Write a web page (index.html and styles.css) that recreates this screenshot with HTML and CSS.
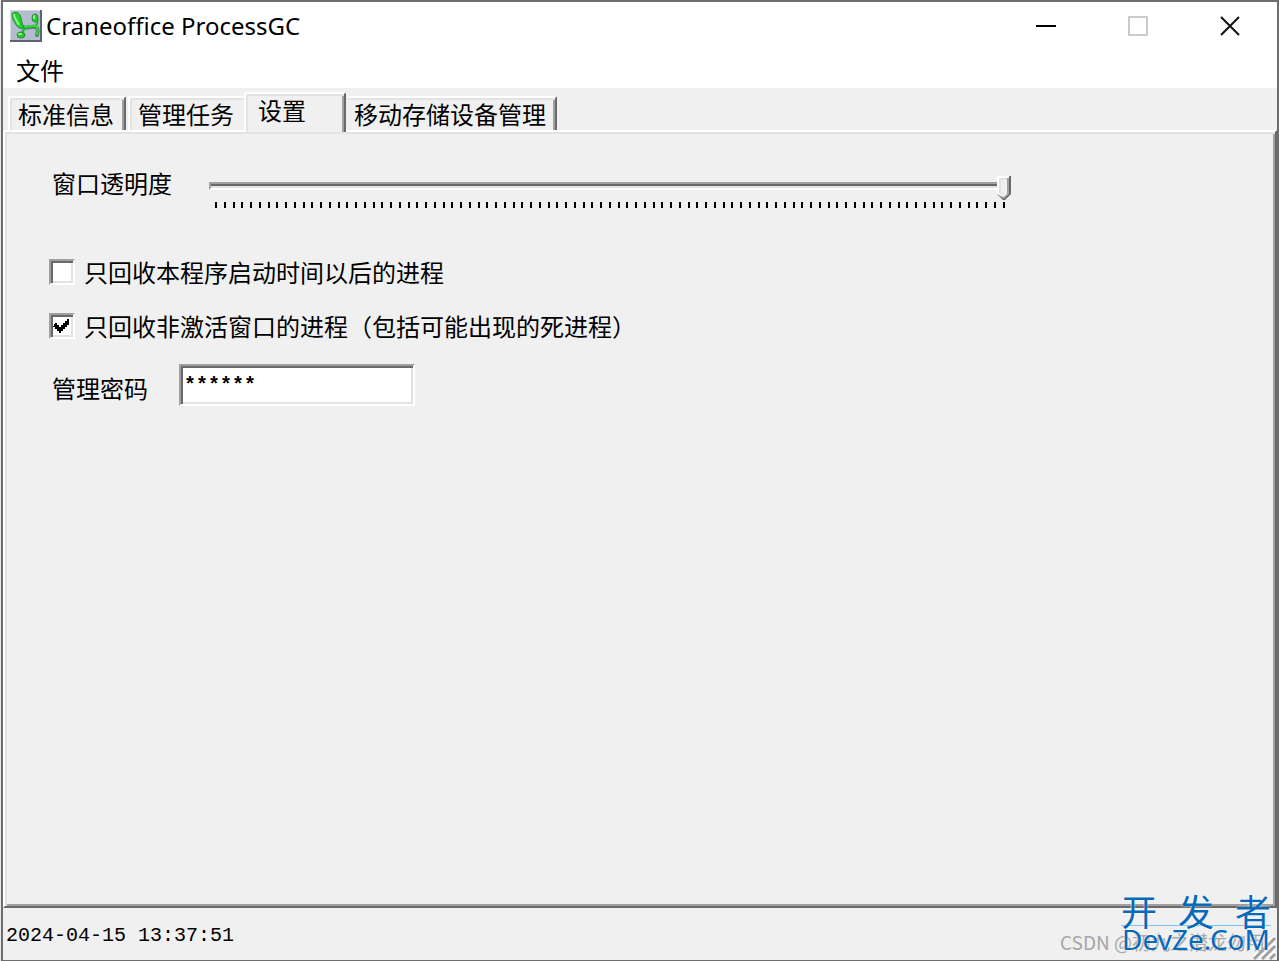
FILE: index.html
```html
<!DOCTYPE html>
<html lang="zh-CN">
<head>
    <meta charset="UTF-8">
    <meta name="viewport" content="width=device-width, initial-scale=1.0">
    <title>Craneoffice ProcessGC</title>
    <link rel="stylesheet" href="styles.css">
</head>
<body>
    <div class="window">
        <div class="titlebar">
            <svg class="app-icon" width="32" height="32" viewBox="0 0 32 32">
                <rect width="32" height="32" fill="#b4bccf"/>
                <path d="M0 31V0h31" fill="none" stroke="#d5d9e2" stroke-width="2"/>
                <path d="M31 0v31H0" fill="none" stroke="#5e6470" stroke-width="2"/>
                <path d="M12 17c5 2 9-1 14 0 2 1 2 4 1 8" fill="none" stroke="#4d8a62" stroke-width="4" stroke-linecap="round"/>
                <path d="M12 16c5 2 9-1 14 0 2 1 2 4 1 8" fill="none" stroke="#2fdc35" stroke-width="2" stroke-linecap="round"/>
                <path d="M26 15c2-2 2-4 1-7" fill="none" stroke="#24b52f" stroke-width="2"/>
                <path d="M2 4c2-3 6-2 8 1 2 4 1 8 4 12-2 2-5 2-7-1C4 12 2 9 2 4z" fill="#20cf27" stroke="#2b8a3c"/>
                <path d="M4 4c0 4 3 7 5 11" fill="none" stroke="#8df58b" stroke-width="2"/>
                <path d="M15 18c-1 2-2 3-3 4" fill="none" stroke="#24b52f" stroke-width="2"/>
                <ellipse cx="11" cy="25" rx="4" ry="3" fill="#20cf27" stroke="#2b8a3c"/>
                <ellipse cx="10" cy="24" rx="2" ry="1" fill="#a4f7a0"/>
                <ellipse cx="25" cy="8" rx="3" ry="4" fill="#20cf27" stroke="#2b8a3c"/>
                <ellipse cx="24" cy="7" rx="1" ry="2" fill="#a4f7a0"/>
            </svg>
            <h1>Craneoffice ProcessGC</h1>
            <div class="window-buttons">
                <button type="button" aria-label="最小化"><svg width="20" height="20"><path d="M0 10h20" stroke="#000" stroke-width="2"/></svg></button>
                <button type="button" aria-label="最大化" disabled><svg width="20" height="20"><path d="M1 1h18v18H1z" fill="none" stroke="#ccc" stroke-width="2"/></svg></button>
                <button type="button" aria-label="关闭"><svg width="20" height="20"><path d="M1 1l18 18M19 1L1 19" stroke="#111" stroke-width="2"/></svg></button>
            </div>
        </div>
        <div class="menubar">
            <button type="button">文件</button>
        </div>
        <div class="tabs" role="tablist">
            <button type="button" class="tab" role="tab">标准信息</button>
            <button type="button" class="tab before-active" role="tab">管理任务</button>
            <button type="button" class="tab active" role="tab" aria-selected="true">设置</button>
            <button type="button" class="tab after-active" role="tab">移动存储设备管理</button>
        </div>
        <div class="panel" role="tabpanel">
            <div class="slider-row">
                <label for="opacity">窗口透明度</label>
                <div class="slider">
                    <input type="range" id="opacity" min="10" max="100" value="100">
                    <div class="ticks" id="ticks"></div>
                </div>
            </div>
            <div class="check-row">
                <input type="checkbox" id="afterStart">
                <label for="afterStart">只回收本程序启动时间以后的进程</label>
            </div>
            <div class="check-row">
                <input type="checkbox" id="inactiveOnly" checked>
                <label for="inactiveOnly">只回收非激活窗口的进程（包括可能出现的死进程）</label>
            </div>
            <div class="password-row">
                <label for="password">管理密码</label>
                <input type="text" id="password" value="******" autocomplete="off">
            </div>
        </div>
        <div class="statusbar">
            <span>2024-04-15 13:37:51</span>
            <svg class="grip" width="24" height="24" viewBox="0 0 24 24">
                <path d="M-1 22L22 -1M7 22L22 7M15 22L22 15" stroke="#fff" stroke-width="2"/>
                <path d="M1 23L22 2M9 23L22 10M17 23L22 18" stroke="#a0a0a0" stroke-width="3"/>
            </svg>
        </div>
        <div class="credit">CSDN @初九之潜龙勿用</div>
        <div class="site-mark">
            <div class="site-name"><span>开</span><span>发</span><span>者</span></div>
            <div class="site-url">DevZe.CoM</div>
        </div>
    </div>

    <script>
        // one tick for each step of the slider
        const ticks = document.getElementById('ticks');
        for (let i = 10; i <= 100; i++) {
            ticks.appendChild(document.createElement('span'));
        }
    </script>
</body>
</html>
```
FILE: styles.css
```css
* {
    box-sizing: border-box;
}
body {
    margin: 0;
    padding-left: 1px;
    background-color: #e8e8e8;
    color: #000;
    font-family: "Noto Sans CJK SC", sans-serif;
    font-size: 24px;
    line-height: 32px;
}
button, input {
    font: inherit;
    color: inherit;
    margin: 0;
}
button {
    border: none;
    background: none;
    padding: 0;
}
.window {
    position: relative;
    display: flex;
    flex-direction: column;
    min-height: 100vh;
    border: 2px solid #6d6d6d;
    border-bottom-width: 1px;
    background-color: #f0f0f0;
}
.titlebar {
    display: flex;
    align-items: center;
    height: 48px;
    padding-left: 7px;
    background-color: #fff;
}
.titlebar h1 {
    flex: 1;
    margin: 0 0 0 4px;
    font-family: "Noto Sans", sans-serif;
    font-size: 24px;
    font-weight: normal;
}
.window-buttons {
    display: flex;
    padding-right: 1px;
}
.window-buttons button {
    display: flex;
    align-items: center;
    justify-content: center;
    width: 92px;
    height: 46px;
}
.menubar {
    height: 38px;
    padding: 4px 0 0 13px;
    background-color: #fff;
}
.tabs {
    position: relative;
    z-index: 1;
    display: flex;
    align-items: flex-end;
    height: 42px;
    padding-left: 5px;
}
.tab {
    height: 34px;
    margin-right: 2px;
    padding: 0 9px 2px 8px;
    border: 2px solid #fff;
    border-right-color: #696969;
    border-bottom: none;
    border-radius: 2px 2px 0 0;
    box-shadow: inset 2px 2px #e3e3e3, inset -2px 0 #a0a0a0;
    white-space: nowrap;
}
.tab:first-child {
    padding-right: 10px;
}
.tab.before-active {
    margin-right: 0;
    padding-right: 10px;
    border-right: none;
    box-shadow: inset 2px 2px #e3e3e3;
}
.tab.active {
    width: 102px;
    height: 40px;
    margin-bottom: -2px;
    padding: 0 0 8px 12px;
    background-color: #f0f0f0;
    text-align: left;
}
.tab.after-active {
    padding-left: 6px;
    border-left: none;
    box-shadow: inset 0 2px #e3e3e3, inset -2px 0 #a0a0a0;
}
.panel {
    flex: 1;
    padding: 35px 44px;
    border: 2px solid;
    border-color: #fff #696969 #696969 #fff;
    box-shadow: inset 2px 2px #e3e3e3, inset -2px -2px #a0a0a0;
}
.slider-row {
    display: flex;
    gap: 37px;
    margin-bottom: 48px;
    padding-left: 3px;
}
.slider {
    flex: 1;
    max-width: 802px;
    padding-top: 7px;
}
.slider input {
    display: block;
    width: 100%;
    height: 24px;
    appearance: none;
    background: none;
}
.slider input::-webkit-slider-runnable-track {
    height: 8px;
    border: 2px solid;
    border-color: #a0a0a0 #fff #fff #a0a0a0;
    background: linear-gradient(#696969 50%, #e3e3e3 50%);
}
.slider input::-webkit-slider-thumb {
    appearance: none;
    position: relative;
    left: 2px;
    width: 14px;
    height: 24px;
    margin-top: -8px;
    background: url("data:image/svg+xml,%3Csvg xmlns='http://www.w3.org/2000/svg' viewBox='0 0 14 24'%3E%3Cpath d='M0 0h14v18l-6 6h-2l-6-6z' fill='%23696969'/%3E%3Cpath d='M0 0h12v18l-5 5-7-5z' fill='%23a0a0a0'/%3E%3Cpath d='M0 0h12v2h-2v16l-4 3-6-3z' fill='%23fff'/%3E%3Cpath d='M2 2h8v16l-3 3-5-4z' fill='%23e3e3e3'/%3E%3Cpath d='M4 4h6v13l-3 3-3-3z' fill='%23f0f0f0'/%3E%3C/svg%3E");
}
.ticks {
    display: flex;
    justify-content: space-between;
    margin: 4px 6px 0;
}
.ticks span {
    width: 2px;
    height: 6px;
    background-color: #000;
}
.check-row {
    display: flex;
    align-items: center;
    gap: 9px;
    margin-bottom: 22px;
}
.check-row input {
    width: 26px;
    height: 26px;
    appearance: none;
}
.check-row input,
.password-row input {
    border: 2px solid;
    border-color: #a0a0a0 #fff #fff #a0a0a0;
    border-radius: 0;
    background-color: #fff;
    box-shadow: inset 2px 2px #696969, inset -2px -2px #e3e3e3;
}
.check-row input:checked {
    background-image: url("data:image/svg+xml,%3Csvg xmlns='http://www.w3.org/2000/svg' viewBox='0 0 22 22' shape-rendering='crispEdges'%3E%3Cpath d='M4 8h2v2h2v2h2v-2h2v-2h2v-2h2v-2h2v6h-2v2h-2v2h-2v2h-2v2h-2v-2h-2v-2h-2v-2h-2z'/%3E%3C/svg%3E");
    background-repeat: no-repeat;
}
.password-row {
    display: flex;
    align-items: center;
    gap: 31px;
    padding-left: 3px;
}
.password-row label {
    padding-top: 6px;
}
.password-row input {
    width: 236px;
    height: 42px;
    padding: 0 3px;
    font-family: "Liberation Mono", monospace;
    font-size: 20px;
    font-weight: bold;
}
.statusbar {
    display: flex;
    align-items: center;
    justify-content: space-between;
    height: 52px;
    padding: 4px 0 0 3px;
    font-family: "Liberation Mono", monospace;
    font-size: 20px;
}
.grip {
    align-self: flex-end;
}
.credit {
    position: absolute;
    right: 12px;
    bottom: 2px;
    color: #a6a6a6;
    font-family: "Noto Sans CJK SC", sans-serif;
    font-size: 19px;
}
.site-mark {
    position: absolute;
    right: 6px;
    bottom: 8px;
    width: 150px;
    color: #0868b9;
    text-shadow: 0 0 2px #fff;
}
.site-name {
    display: flex;
    justify-content: space-between;
    border-bottom: 1px solid #71c9f2;
    font-size: 36px;
    line-height: 30px;
}
.site-url {
    font-family: "Noto Sans", sans-serif;
    font-size: 28px;
    line-height: 26px;
    text-align: center;
}
```
